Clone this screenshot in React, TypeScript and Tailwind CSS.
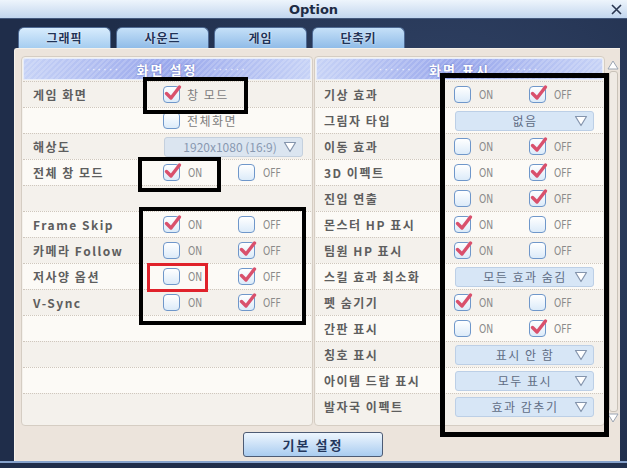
import type { ReactNode } from "react";

const KR = "font-['Noto_Sans_CJK_KR','Noto_Sans',sans-serif]";

type Ctl =
  | { kind: "onoff"; value: "on" | "off" }
  | { kind: "check"; on: boolean; text: string }
  | { kind: "select"; text: string; disabled?: boolean }
  | { kind: "none" };

type Row = { label: string; ctl: Ctl };

const leftRows: Row[] = [
  { label: "게임 화면", ctl: { kind: "check", on: true, text: "창 모드" } },
  { label: "", ctl: { kind: "check", on: false, text: "전체화면" } },
  { label: "해상도", ctl: { kind: "select", text: "1920x1080 (16:9)", disabled: true } },
  { label: "전체 창 모드", ctl: { kind: "onoff", value: "on" } },
  { label: "", ctl: { kind: "none" } },
  { label: "Frame Skip", ctl: { kind: "onoff", value: "on" } },
  { label: "카메라 Follow", ctl: { kind: "onoff", value: "off" } },
  { label: "저사양 옵션", ctl: { kind: "onoff", value: "off" } },
  { label: "V-Sync", ctl: { kind: "onoff", value: "off" } },
  { label: "", ctl: { kind: "none" } },
  { label: "", ctl: { kind: "none" } },
  { label: "", ctl: { kind: "none" } },
  { label: "", ctl: { kind: "none" } },
];

const rightRows: Row[] = [
  { label: "기상 효과", ctl: { kind: "onoff", value: "off" } },
  { label: "그림자 타입", ctl: { kind: "select", text: "없음" } },
  { label: "이동 효과", ctl: { kind: "onoff", value: "off" } },
  { label: "3D 이펙트", ctl: { kind: "onoff", value: "off" } },
  { label: "진입 연출", ctl: { kind: "onoff", value: "off" } },
  { label: "몬스터 HP 표시", ctl: { kind: "onoff", value: "on" } },
  { label: "팀원 HP 표시", ctl: { kind: "onoff", value: "on" } },
  { label: "스킬 효과 최소화", ctl: { kind: "select", text: "모든 효과 숨김" } },
  { label: "펫 숨기기", ctl: { kind: "onoff", value: "on" } },
  { label: "간판 표시", ctl: { kind: "onoff", value: "off" } },
  { label: "칭호 표시", ctl: { kind: "select", text: "표시 안 함" } },
  { label: "아이템 드랍 표시", ctl: { kind: "select", text: "모두 표시" } },
  { label: "발자국 이펙트", ctl: { kind: "select", text: "효과 감추기" } },
];

function Box({ on }: { on?: boolean }) {
  return (
    <span className="relative inline-block h-[17px] w-[17px] shrink-0 rounded-[4px] border-[1.5px] border-[#6f97ca] bg-[linear-gradient(180deg,#ffffff,#dcebf9)]">
      {on ? (
        <svg className="absolute -left-[1px] -top-[3px]" width="19" height="19" viewBox="0 0 19 19">
          <path d="M3.5 9.5 L8 14 L16.5 3" fill="none" stroke="#d9506c" strokeWidth="3.4" strokeLinecap="round" strokeLinejoin="round" />
        </svg>
      ) : null}
    </span>
  );
}

function Caption({ children }: { children: ReactNode }) {
  return (
    <span className="font-['DejaVu_Sans_Condensed','Liberation_Sans',sans-serif] text-[12px] leading-none text-[#8a8a8a] [transform:scaleX(0.85)] origin-left">
      {children}
    </span>
  );
}

function Triangle() {
  return (
    <svg width="14" height="12" viewBox="0 0 14 12" className="shrink-0">
      <path d="M1.5 1.5 H12.5 L7 10.5 Z" fill="#ffffff" stroke="#8595ad" strokeWidth="1.2" strokeLinejoin="round" />
    </svg>
  );
}

function Control({ ctl }: { ctl: Ctl }) {
  if (ctl.kind === "onoff") {
    return (
      <div className="flex items-center">
        <div className="flex w-[75px] items-center gap-[8px]">
          <Box on={ctl.value === "on"} />
          <Caption>ON</Caption>
        </div>
        <div className="flex items-center gap-[8px]">
          <Box on={ctl.value === "off"} />
          <Caption>OFF</Caption>
        </div>
      </div>
    );
  }
  if (ctl.kind === "check") {
    return (
      <div className="flex items-center gap-[7px]">
        <Box on={ctl.on} />
        <span className={`${KR} text-[12px] leading-none tracking-[1.5px] text-[#7c7c7c]`}>{ctl.text}</span>
      </div>
    );
  }
  if (ctl.kind === "select") {
    return (
      <div
        className={`ml-[1px] flex h-[20px] w-[139px] items-center rounded-[3px] border pr-[5px] ${
          ctl.disabled ? "border-[#c4d0de] bg-[#dbe5f0] pl-[12px]" : "border-[#bccfe6] bg-[#d7e6f6] pl-[20px]"
        }`}
      >
        <span
          className={`${KR} flex-1 whitespace-nowrap text-center text-[12px] leading-none ${
            ctl.disabled ? "tracking-[0px] text-[#8898b0]" : "tracking-[1.5px] text-[#5f6d85]"
          }`}
        >
          {ctl.text}
        </span>
        <Triangle />
      </div>
    );
  }
  return null;
}

function Header({ title }: { title: string }) {
  return (
    <div className="flex h-[22px] items-center justify-center gap-[16px] rounded-[2px] border border-[#e6ecfb] bg-[#a9b6ef] [background-image:repeating-linear-gradient(135deg,rgba(255,255,255,0.16)_0_2px,transparent_2px_4px),linear-gradient(90deg,#c6d2f6,#9aa8ec_50%,#c6d2f6)]">
      <span className="text-[10px] leading-none tracking-[3px] text-[#eef2ff]">······</span>
      <span className={`${KR} text-[13px] font-bold leading-none tracking-[2px] text-white [text-shadow:0_0_2px_#5a66b8]`}>{title}</span>
      <span className="text-[10px] leading-none tracking-[3px] text-[#eef2ff]">······</span>
    </div>
  );
}

function Panel({ title, rows, pad, width }: { title: string; rows: Row[]; pad: string; width: string }) {
  return (
    <div className={`${width} flex h-[370px] flex-col rounded-[4px] border border-[#d5cdc3] bg-[#f4f1ec] p-[1px]`}>
      <Header title={title} />
      <div className="mt-[1px] flex flex-col">
        {rows.map((r, i) => (
          <div
            key={i}
            className={`flex h-[26px] items-center border-t border-dotted border-[#cfc7bd] ${pad} ${
              i % 2 === 0 ? "bg-[#f4f1ec]" : "bg-[#fcfaf6]"
            }`}
          >
            <span className={`${KR} w-[130px] shrink-0 text-[12px] font-bold leading-none tracking-[1.5px] text-[#5e5e5e]`}>
              {r.label}
            </span>
            <Control ctl={r.ctl} />
          </div>
        ))}
      </div>
    </div>
  );
}

function Scrollbar() {
  return (
    <div className="flex h-[370px] w-[12px] flex-col items-center pt-[4px]">
      <svg width="12" height="10" viewBox="0 0 12 10">
        <path d="M1 9 H11 L6 1 Z" fill="#ffffff" stroke="#9aa4b2" strokeWidth="1" strokeLinejoin="round" />
      </svg>
      <div className="mt-[1px] w-[9px] flex-1 rounded-[3px] border border-[#c9c2b8] bg-[#efeae4]" />
      <svg width="12" height="10" viewBox="0 0 12 10" className="mb-[3px] mt-[1px]">
        <path d="M1 1 H11 L6 9 Z" fill="#ffffff" stroke="#9aa4b2" strokeWidth="1" strokeLinejoin="round" />
      </svg>
    </div>
  );
}

const tabs = ["그래픽", "사운드", "게임", "단축키"];

export default function App() {
  return (
    <div className="relative flex h-[468px] w-[627px] flex-col overflow-hidden bg-[#25365a] [background-image:radial-gradient(circle_at_70%_40%,#34476b,#1f2d4a_70%)]">
      {/* title bar */}
      <div className="relative flex h-[19px] shrink-0 items-center justify-center border-b border-[#43587c] bg-[linear-gradient(180deg,#eef5fc,#c2d6ee)]">
        <span className="font-['DejaVu_Sans',sans-serif] text-[13px] font-bold leading-none text-[#1d2b45]">Option</span>
        <svg className="absolute right-[5px] top-[4px]" width="11" height="11" viewBox="0 0 11 11">
          <path d="M1 1 L10 10 M10 1 L1 10" stroke="#2a3650" strokeWidth="1.6" />
        </svg>
      </div>

      {/* tabs */}
      <div className="flex h-[29px] shrink-0 items-end gap-[5px] pl-[18px]">
        {tabs.map((t, i) => (
          <div
            key={t}
            className={`flex h-[21px] w-[93px] items-center justify-center rounded-t-[6px] border border-b-0 border-[#4e6a94] ${
              i === 0
                ? "bg-[linear-gradient(180deg,#d8ecfd,#a6cdf0)]"
                : "bg-[linear-gradient(180deg,#c5e0f8,#90bce8)]"
            }`}
          >
            <span className={`${KR} text-[12px] font-bold leading-none tracking-[1px] text-[#1f3358] [text-shadow:0_0_2px_#ffffff]`}>
              {t}
            </span>
          </div>
        ))}
      </div>

      {/* body */}
      <div className="ml-[14px] mr-[7px] flex h-[413px] shrink-0 flex-col rounded-tl-[3px] border-l border-t border-[#f6f1ea] bg-[#ece4dc] pl-[6px] pt-[7px]">
        <div className="flex items-start">
          <Panel title="화면 설정" rows={leftRows} pad="pl-[10px]" width="w-[292px]" />
          <div className="ml-[1px]">
            <Panel title="화면 표시" rows={rightRows} pad="pl-[8px]" width="w-[291px]" />
          </div>
          <div className="ml-[2px]">
            <Scrollbar />
          </div>
        </div>
        <div className="mt-[6px] pl-[222px]">
          <button className="flex h-[25px] w-[140px] items-center justify-center rounded-[3px] border border-[#4d5b74] bg-[linear-gradient(180deg,#eef6fe,#a9ccf0)]">
            <span className={`${KR} text-[13px] font-bold leading-none tracking-[2px] text-[#23365c]`}>기본 설정</span>
          </button>
        </div>
      </div>
      <div className="h-[2px] shrink-0 bg-[#86a2cc]" />

      {/* annotation marks */}
      <div className="absolute left-[143px] top-[77px] h-[37px] w-[105px] border-[4px] border-black" />
      <div className="absolute left-[138px] top-[157px] h-[35px] w-[83px] border-[4px] border-black" />
      <div className="absolute left-[139px] top-[207px] h-[118px] w-[167px] border-[4px] border-black" />
      <div className="absolute left-[147px] top-[263px] h-[29px] w-[61px] border-[3px] border-[#e0222b]" />
      <div className="absolute left-[440px] top-[73px] h-[364px] w-[169px] border-[5px] border-black" />
    </div>
  );
}
